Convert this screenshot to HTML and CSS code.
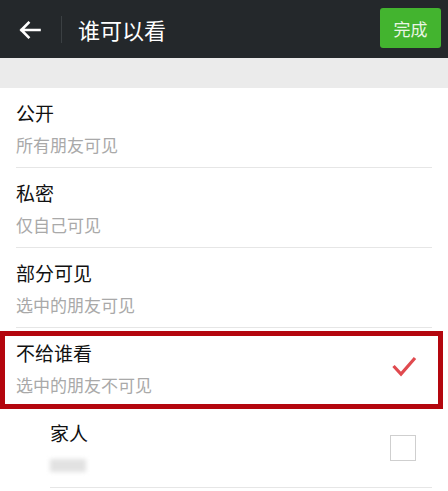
FILE: index.html
```html
<!DOCTYPE html>
<html lang="zh">
<head>
<meta charset="utf-8">
<link rel="stylesheet" href="styles.css">
</head>
<body>
<div class="app">
  <header class="topbar">
    <div class="back">
      <svg width="22" height="18" viewBox="0 0 22 18"><path d="M20.5 9H2.5M9.5 1.8L2.3 9l7.2 7.2" fill="none" stroke="#fff" stroke-width="2.6" stroke-linecap="square"/></svg>
    </div>
    <div class="vsep"></div>
    <div class="title">谁可以看</div>
    <button class="done">完成</button>
  </header>
  <div class="band"></div>
  <ul class="list">
    <li class="row">
      <div class="texts"><div class="t">公开</div><div class="s">所有朋友可见</div></div>
    </li>
    <li class="row">
      <div class="texts"><div class="t">私密</div><div class="s">仅自己可见</div></div>
    </li>
    <li class="row">
      <div class="texts"><div class="t">部分可见</div><div class="s">选中的朋友可见</div></div>
    </li>
    <li class="row selected">
      <div class="texts"><div class="t">不给谁看</div><div class="s">选中的朋友不可见</div></div>
      <svg class="check" width="26" height="22" viewBox="0 0 26 22"><path d="M2.5 11l7.5 8L24 3" fill="none" stroke="#e04a4f" stroke-width="3.2"/></svg>
      <div class="mark"></div>
    </li>
    <li class="row sub">
      <div class="texts"><div class="t">家人</div><div class="s"><span class="blur"></span></div></div>
      <div class="box"></div>
    </li>
  </ul>
</div>
</body>
</html>
```
FILE: styles.css
```css
* { box-sizing: border-box; }
html, body { margin: 0; padding: 0; background: #fff; }
body { font-family: "Noto Sans CJK SC", "Noto Sans", sans-serif; }
.app { width: 448px; }
.topbar {
  height: 58px;
  background: #24282b;
  display: flex;
  align-items: center;
  padding: 0 7px 0 19px;
}
.back { width: 22px; height: 18px; display: flex; margin-top: 2px; }
.vsep { width: 1px; height: 27px; background: #3b4043; margin-left: 20px; }
.title { color: #fff; font-size: 22px; margin-left: 16px; flex: 1; line-height: 30px; }
.done {
  border: none;
  background: #43b42f;
  color: #e9f5e4;
  font-family: inherit;
  font-size: 17px;
  width: 61px;
  height: 40px;
  border-radius: 3px;
  padding: 0;
  margin-top: -2px;
}
.band { height: 30px; background: #ebebeb; }
.list { list-style: none; margin: 0; padding: 0; }
.row {
  position: relative;
  height: 80px;
  margin: 0 16px;
  border-bottom: 1px solid #e6e6e6;
  display: flex;
  align-items: flex-start;
}
.texts { flex: 1; padding-top: 14px; }
.t { font-size: 19px; line-height: 22px; color: #111; }
.s { font-size: 17px; line-height: 22px; color: #a9a9a9; margin-top: 10px; }
.check { position: absolute; right: 15px; top: 27px; }
.mark {
  position: absolute;
  left: -16px;
  top: 3px;
  width: 443px;
  height: 78px;
  border: 5px solid #b4060e;
  pointer-events: none;
}
.selected { border-bottom-color: transparent; }
.sub { margin-left: 50px; }
.sub .texts { padding-top: 14px; }
.sub .s { margin-top: 8px; }
.blur {
  display: inline-block;
  width: 36px;
  height: 13px;
  background: #e2e2e2;
  filter: blur(2px);
  vertical-align: middle;
}
.box {
  position: absolute;
  right: 16px;
  top: 27px;
  width: 26px;
  height: 26px;
  border: 1.5px solid #cfcfcf;
}
```
